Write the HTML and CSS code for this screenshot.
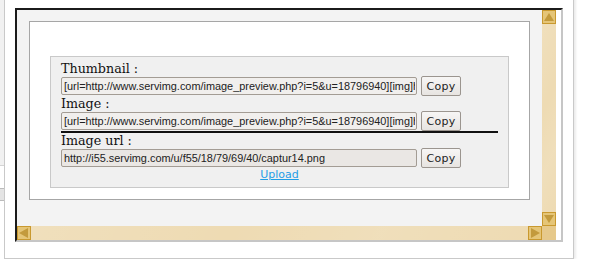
FILE: index.html
```html
<!DOCTYPE html>
<html lang="en">
<head>
    <meta charset="UTF-8">
    <title>Servimg upload</title>
    <link rel="stylesheet" href="styles.css">
</head>
<body>
    <div class="behind">
        <div class="behind-top"></div>
        <div class="behind-btn"></div>
    </div>
    <div class="dialog">
        <div class="frame">
            <div class="view">
                <div class="box">
                    <div class="panel">
                        <div class="label">Thumbnail :</div>
                        <div class="row">
                            <input type="text" class="code" value="[url=http://www.servimg.com/image_preview.php?i=5&amp;u=18796940][img]http://i55.servimg.com/u/f55/18/79/69/40/th/captur14.png[/img][/url]">
                            <button>Copy</button>
                        </div>
                        <div class="label">Image :</div>
                        <div class="row">
                            <input type="text" class="code" value="[url=http://www.servimg.com/image_preview.php?i=5&amp;u=18796940][img]http://i55.servimg.com/u/f55/18/79/69/40/captur14.png[/img][/url]">
                            <button>Copy</button>
                        </div>
                        <hr class="sep">
                        <div class="label">Image url :</div>
                        <div class="row">
                            <input type="text" class="code url" value="http://i55.servimg.com/u/f55/18/79/69/40/captur14.png" readonly>
                            <button>Copy</button>
                        </div>
                        <div class="upload"><a href="#">Upload</a></div>
                    </div>
                </div>
            </div>
            <div class="vbar">
                <div class="sbtn">
                    <svg width="12" height="12" viewBox="0 0 12 12"><polygon points="6,2 11,10 1,10" fill="#c39a3c"/></svg>
                </div>
                <div class="track"></div>
                <div class="sbtn">
                    <svg width="12" height="12" viewBox="0 0 12 12"><polygon points="1,2 11,2 6,10" fill="#c39a3c"/></svg>
                </div>
            </div>
            <div class="hbar">
                <div class="sbtn">
                    <svg width="12" height="12" viewBox="0 0 12 12"><polygon points="1,6 10,1 10,11" fill="#c39a3c"/></svg>
                </div>
                <div class="track"></div>
                <div class="sbtn">
                    <svg width="12" height="12" viewBox="0 0 12 12"><polygon points="2,1 11,6 2,11" fill="#c39a3c"/></svg>
                </div>
            </div>
            <div class="corner"></div>
        </div>
    </div>
</body>
</html>
```

FILE: styles.css
```css
body {
    margin: 0;
    height: 259px;
    overflow: hidden;
    display: flex;
    background: #fff;
}
.behind {
    width: 4px;
    flex-shrink: 0;
}
.behind-top {
    height: 165px;
    background: #f1f1f1;
    border-bottom: 1px solid #d4d4d4;
}
.behind-btn {
    margin-top: 22px;
    height: 11px;
    background: #e4e4e4;
    border-top: 1px solid #bbb;
    border-bottom: 1px solid #bbb;
}
.dialog {
    width: 548px;
    margin-top: -20px;
    padding: 28px 10px 16px 10px;
    background: #fff;
    border: 1px solid #c9c9c9;
    border-top: none;
    box-shadow: 2px 0 2px rgba(0, 0, 0, 0.08);
    align-self: flex-start;
}
.frame {
    display: grid;
    grid-template-columns: 525px 14px;
    grid-template-rows: 216px 14px;
    border-top: 2px solid #1b1b1b;
    border-left: 2px solid #1b1b1b;
    border-right: 2px solid #c6c6c6;
    border-bottom: 2px solid #c6c6c6;
}
.view {
    background: #f3f3f3;
    padding: 11px 12px 0 12px;
    overflow: hidden;
}
.box {
    background: #fff;
    border: 1px solid #a6a6a6;
    padding: 34px 20px 11px 20px;
}
.panel {
    background: #f0f0f0;
    border: 1px solid #c9c9c9;
    padding: 4px 10px 5px 10px;
}
.label {
    font: 12.7px/15px "DejaVu Serif", serif;
    color: #111;
}
.row {
    display: flex;
    align-items: center;
    gap: 4px;
    height: 20px;
}
.code {
    width: 356px;
    height: 18px;
    box-sizing: border-box;
    margin: 0;
    padding: 0 1px 0 2px;
    border: 1px solid #a39c94;
    border-radius: 2px;
    background: #f1efed;
    font: 10.9px "Liberation Sans", Arial, sans-serif;
    color: #222;
}
.url {
    background: #eae7e4;
}
button {
    width: 40px;
    height: 20px;
    margin: 0;
    padding: 0;
    border: 1px solid #9b958f;
    border-radius: 2px;
    background: linear-gradient(#f7f6f5, #e7e4e1);
    font: 11px "DejaVu Sans", sans-serif;
    color: #222;
    letter-spacing: 0.3px;
}
.sep {
    margin: 0;
    border: none;
    border-top: 2px solid #111;
    height: 0;
}
.upload {
    text-align: center;
    font: 11px/14px "DejaVu Sans", sans-serif;
}
.upload a {
    color: #1f9de6;
}
.vbar, .hbar {
    display: flex;
    background: #eedbb3;
}
.vbar {
    flex-direction: column;
}
.track {
    flex: 1;
    background:
        linear-gradient(115deg, rgba(255, 255, 255, 0.12), rgba(0, 0, 0, 0) 40%, rgba(255, 255, 255, 0.1) 70%, rgba(0, 0, 0, 0)),
        #eedbb3;
}
.sbtn {
    width: 14px;
    height: 14px;
    box-sizing: border-box;
    background: #e5c577;
    border: 1px solid #c9992f;
    display: flex;
    align-items: center;
    justify-content: center;
}
.corner {
    background: #e6c98b;
}
```
